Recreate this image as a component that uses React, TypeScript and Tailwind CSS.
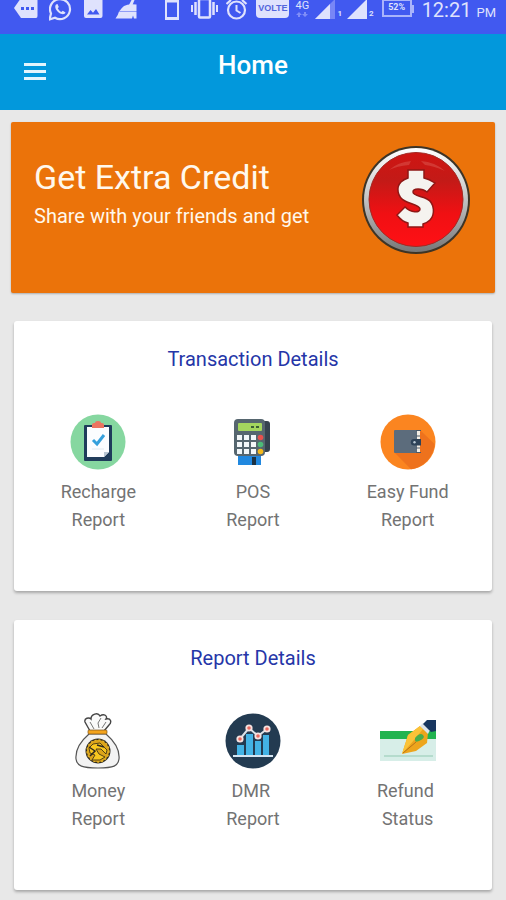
import type { ReactNode } from "react";

function StatusBar() {
  return (
    <div className="flex h-[34px] items-start justify-between bg-[#4159f0] pr-[10px] pl-[14px] text-[#dfe2fd]">
      <div className="flex items-start gap-[11px]" aria-hidden="true">
        <svg width="24" height="20" viewBox="0 0 24 20" fill="currentColor">
          <path d="M7 -2H22Q23.500 -2 23.500 0V16Q23.500 18 22 18H7L0 8Z" />
          <g fill="#4159f0">
            <rect x="7" y="7" width="3" height="3" />
            <rect x="12" y="7" width="3" height="3" />
            <rect x="17" y="7" width="3" height="3" />
          </g>
        </svg>
        <svg width="24" height="22" viewBox="0 0 24 22" fill="none" stroke="currentColor" strokeWidth="2.2">
          <path d="M0.500 19.500L2 13.500A10 10 0 1 1 6 17.800Z" />
          <path
            d="M7 4.500C5 7 7.500 11 10 12.700C12.800 14.800 16 14.500 16.500 12.500L13.800 10.700L12.300 12C10.500 11 9.500 9.800 8.800 8.300L9.800 7L8.500 4Z"
            fill="currentColor"
            stroke="none"
          />
        </svg>
        <svg width="19" height="20" viewBox="0 0 19 20" fill="currentColor">
          <rect x="0" y="-2" width="18.500" height="20" rx="2" />
          <path d="M3 14.500L6.500 10L9 12.700L12 9L15.500 14.500Z" fill="#4159f0" />
        </svg>
        <svg width="24" height="20" viewBox="0 0 24 20" fill="currentColor">
          <path d="M17.500 0H20.500L18.500 5H15Z" />
          <path d="M10 6Q14 3.500 22.500 4.500V11H5.500Q7.500 8 10 6Z" />
          <path d="M5 11.500H22.500V18.500H20L19 15.500L18 18.500H1.500Q4 15.500 5 11.500Z" />
        </svg>
      </div>
      <div className="flex items-start gap-2">
        <svg width="19" height="22" viewBox="0 0 19 22" aria-hidden="true">
          <path d="M2 -2H14V18.500H2Z" fill="none" stroke="currentColor" strokeWidth="2" />
          <path d="M1 1H15M1 18.500H15" stroke="currentColor" strokeWidth="3" />
        </svg>
        <svg width="27" height="20" viewBox="0 0 27 20" fill="none" stroke="currentColor" aria-hidden="true">
          <rect x="8" y="-1" width="11" height="18.500" rx="1" strokeWidth="2.500" />
          <path d="M4.500 2V15M22.500 2V15" strokeWidth="2.500" />
          <path d="M1 5V12M26 5V12" strokeWidth="2" />
        </svg>
        <svg width="22" height="22" viewBox="0 0 22 22" fill="none" stroke="currentColor" aria-hidden="true">
          <circle cx="10.500" cy="10" r="8.500" strokeWidth="2.200" />
          <path d="M10.500 5V10.500L14.500 13" strokeWidth="2" />
          <path d="M0.500 4L5 0M20.500 4L16 0" strokeWidth="2.200" />
        </svg>
        <div className="flex items-start gap-[5px]">
          <span className="flex h-[18px] w-[33px] items-center justify-center rounded-b bg-[#dfe2fd] font-['Liberation_Sans',sans-serif] text-[9px] font-bold text-[#5365dc]">
            VOLTE
          </span>
          <span className="flex w-4 flex-col items-center text-[11px] leading-[12px]">
            4G
            <svg width="12" height="5" viewBox="0 0 12 5" fill="#7f8df7" aria-hidden="true">
              <path d="M0 3L3 0L6 3H4V5H2V3ZM6 2H8V0H10V2H12L9 5Z" />
            </svg>
          </span>
          <span className="flex items-end">
            <svg width="22" height="19" viewBox="0 0 22 19" aria-hidden="true">
              <path d="M0 19L20 -1V19Z" fill="#7886f6" />
              <path d="M0 19L15 4V19Z" fill="currentColor" />
            </svg>
            <span className="text-[8px] leading-[10px] font-bold">1</span>
          </span>
          <span className="flex items-end">
            <svg width="22" height="19" viewBox="0 0 22 19" aria-hidden="true">
              <path d="M0 19L20 -1V19Z" fill="currentColor" />
            </svg>
            <span className="text-[8px] leading-[10px] font-bold">2</span>
          </span>
        </div>
        <div className="flex items-center">
          <span className="flex h-[17px] w-[30px] items-center justify-center border-2 border-t border-[#a9b3fb] text-[9px] font-bold">
            52%
          </span>
          <span className="h-2 w-[2px] bg-[#a9b3fb]" />
        </div>
        <div className="flex items-baseline gap-[5px]">
          <span className="text-[20px] leading-[20px]">12:21</span>
          <span className="text-[13px] leading-[16px]">PM</span>
        </div>
      </div>
    </div>
  );
}

function DollarBadge() {
  return (
    <svg width="110" height="110" viewBox="0 0 110 110" className="shrink-0" role="img" aria-label="Dollar">
      <defs>
        <linearGradient id="rim" x1="0" y1="0" x2="0" y2="1">
          <stop offset="0" stopColor="#ffffff" />
          <stop offset="0.450" stopColor="#c9c9c9" />
          <stop offset="1" stopColor="#777777" />
        </linearGradient>
        <linearGradient id="face" x1="0" y1="0" x2="0" y2="1">
          <stop offset="0" stopColor="#cf1512" />
          <stop offset="0.300" stopColor="#c31a17" />
          <stop offset="0.650" stopColor="#f01013" />
          <stop offset="1" stopColor="#ff1015" />
        </linearGradient>
      </defs>
      <circle cx="55" cy="55" r="54" fill="#3d3426" />
      <circle cx="55" cy="55" r="52" fill="url(#rim)" />
      <circle cx="55" cy="54.500" r="47" fill="url(#face)" stroke="#a32a24" strokeWidth="1" />
      <path
        d="M28 25Q37 17 50 16L48 20Q36 21 28 25ZM60 16Q74 17 84 26Q73 21 64 20Z"
        fill="#d94f48"
        opacity="0.600"
      />
      <path
        d="M47 25H63V33C68 34 71 36 74 38L66 47C61 43 52 43 52 47C52 51 61 51 66 54C74 58 74 70 69 75C67 77 65 78 62 79V82H47V78C42 77 39 74 36 70L44 62C50 68 59 68 59 64C59 60 49 59 44 56C36 52 35 42 40 37C42 35 44 34 47 33Z"
        fill="#f5f3ef"
        stroke="#8f1715"
        strokeWidth="1.500"
      />
    </svg>
  );
}

const iconProps = { width: 56, height: 56, viewBox: "0 0 56 56", "aria-hidden": true } as const;

function ClipboardIcon() {
  return (
    <svg {...iconProps}>
      <circle cx="28" cy="28" r="27.500" fill="#86d7a0" />
      <rect x="14" y="11" width="28" height="36" rx="1" fill="#1f3c5b" />
      <path d="M17 13H39V38L34 43H17Z" fill="#fbfdff" />
      <path d="M39 38L34 43V38Z" fill="#b8c6d3" />
      <path d="M22 14V11Q22 9 24 9H25Q25 7 28 7T31 9H32Q34 9 34 11V14Z" fill="#ec7460" />
      <path d="M23 26L27 30L34 21" fill="none" stroke="#35a0dc" strokeWidth="3" />
      <path d="M22 35H34" stroke="#e3eaf0" />
    </svg>
  );
}

function PosIcon() {
  return (
    <svg {...iconProps}>
      <rect x="33" y="7" width="12" height="31" rx="3" fill="#36434f" />
      <rect x="13" y="40" width="23" height="11" fill="#2188df" />
      <rect x="27" y="43" width="4" height="8" fill="#1b3244" />
      <rect x="9" y="5" width="31" height="37" rx="4" fill="#56666f" />
      <rect x="13" y="9" width="24" height="8" rx="1" fill="#a4d65e" />
      <path d="M26 13H29M31 13H34" stroke="#3c5f35" strokeWidth="2" />
      <g fill="#f3f7f9">
        <rect x="12" y="21" width="5" height="5" />
        <rect x="19" y="21" width="5" height="5" />
        <rect x="26" y="21" width="5" height="5" />
        <rect x="12" y="28" width="5" height="5" />
        <rect x="19" y="28" width="5" height="5" />
        <rect x="26" y="28" width="5" height="5" />
        <rect x="12" y="35" width="5" height="5" />
        <rect x="19" y="35" width="5" height="5" />
        <rect x="26" y="35" width="5" height="5" />
      </g>
      <circle cx="35.500" cy="23.500" r="2.800" fill="#e8504d" />
      <circle cx="35.500" cy="30.500" r="2.800" fill="#4dbb78" />
      <circle cx="35.500" cy="37.500" r="2.800" fill="#f4b91c" />
    </svg>
  );
}

function WalletIcon() {
  return (
    <svg {...iconProps}>
      <circle cx="28" cy="28" r="27.500" fill="#fb8520" />
      <path d="M41 17L54.500 30A27.500 27.500 0 0 1 31 55.300L15 39Z" fill="#ee721d" />
      <rect x="14" y="16" width="25" height="23" rx="1" fill="#5c6c7c" />
      <rect x="37" y="17" width="3" height="21" fill="#f4eee5" />
      <path d="M36 16.500H41M36 22H40M36 34H40M36 38.500H41" stroke="#4a5a69" />
      <path d="M41 25H34A3.200 3.200 0 0 0 34 31.400H41Z" fill="#2d4258" />
      <circle cx="34.500" cy="28.200" r="1.200" fill="#b9c8d4" />
    </svg>
  );
}

function MoneyBagIcon() {
  return (
    <svg {...iconProps}>
      <path
        d="M20 18L15 9C14 5 19 4 21 6C21 1 28 -1 30 3C34 0 38 3 36 6C41 5 42 9 39 12L34 18Z"
        fill="#fafafa"
        stroke="#454545"
        strokeWidth="1.400"
      />
      <path d="M24 16L20 9M29 15L28 10L31 5M32 15L36 9" fill="none" stroke="#777" />
      <path
        d="M19 21C12 27 5 35 6 46C7 53 12 55 28 55S48 53 49 46C50 36 43 27 36 21Z"
        fill="#f3f3f3"
        stroke="#555555"
        strokeWidth="1.200"
      />
      <rect x="18" y="17" width="19" height="4" rx="1" fill="#f4a41d" stroke="#7a5420" strokeWidth="0.700" />
      <circle cx="28" cy="38" r="12.500" fill="#2d2920" />
      <circle cx="28" cy="38" r="11" fill="#dca41a" stroke="#e2b128" strokeWidth="1.400" strokeDasharray="2 2" />
      <path
        d="M19 35L23 31L30 30L37 37L36 41L31 36L26 36L29 41L35 44L30 47H22L25 42L20 40Z"
        fill="#f8c71f"
        stroke="#44351a"
        strokeWidth="0.900"
      />
      <path d="M19 34L25 38L20 43M27 32L34 34" fill="none" stroke="#2d2920" strokeWidth="1.500" />
    </svg>
  );
}

function ChartIcon() {
  return (
    <svg {...iconProps}>
      <circle cx="28" cy="28" r="27.500" fill="#233b51" />
      <path d="M12 32H19V43H12ZM21 21H28V43H21ZM30 28H36V43H30ZM38 22H44V43H38Z" fill="#43b3e5" />
      <path d="M8 43H48" stroke="#d5e6f3" strokeWidth="2" />
      <path d="M15 26L24 15L33 23L42 16" fill="none" stroke="#dbe2e8" strokeWidth="2" />
      <g fill="#e9695f" stroke="#f5e3e1" strokeWidth="1.800">
        <circle cx="15" cy="26" r="2.700" />
        <circle cx="24" cy="15" r="2.700" />
        <circle cx="33" cy="23" r="2.700" />
        <circle cx="42" cy="16" r="2.700" />
      </g>
    </svg>
  );
}

function ChequeIcon() {
  return (
    <svg {...iconProps}>
      <rect x="0" y="18" width="56" height="30" fill="#d7eee8" />
      <rect x="0" y="18" width="56" height="8" fill="#22b350" />
      <path d="M4 43H53" stroke="#92c9b2" />
      <path d="M22 41L28 22L40 13L48 20L47 30L36 38Z" fill="#eda51c" />
      <path d="M22 41L28 22L40 13L43 16L34 27Z" fill="#fbc338" />
      <path d="M23 40L36 29" stroke="#b5731a" />
      <path d="M35 25Q40 19 43 22T39 28Q35 30 35 27Z" fill="#49ad4b" />
      <path d="M40 13L43 10L50 17L48 21Z" fill="#dce4ea" />
      <path d="M43 11L47 7H56V18L51 19Z" fill="#183760" />
    </svg>
  );
}

type Item = { icon: ReactNode; lines: [string, string] };

function ReportCard({ title, items }: { title: string; items: Item[] }) {
  return (
    <section className="rounded-[3px] bg-white px-[7px] pt-[25px] pb-[57px] shadow-[0_2px_3px_rgba(0,0,0,0.28)]">
      <h2 className="text-center text-[20px] leading-[26px] text-[#2536a8]">{title}</h2>
      <div className="mt-[42px] grid grid-cols-3">
        {items.map(({ icon, lines }) => (
          <button key={lines.join(" ")} type="button" className="flex flex-col items-center">
            {icon}
            <span className="mt-2 text-[18px] leading-[28px] text-[#737373]">
              {lines[0]}
              <br />
              {lines[1]}
            </span>
          </button>
        ))}
      </div>
    </section>
  );
}

const transactions: Item[] = [
  { icon: <ClipboardIcon />, lines: ["Recharge", "Report"] },
  { icon: <PosIcon />, lines: ["POS", "Report"] },
  { icon: <WalletIcon />, lines: ["Easy Fund", "Report"] },
];

const reports: Item[] = [
  { icon: <MoneyBagIcon />, lines: ["Money", "Report"] },
  { icon: <ChartIcon />, lines: ["DMR\u00a0", "Report"] },
  { icon: <ChequeIcon />, lines: ["Refund\u00a0", "Status"] },
];

export default function App() {
  return (
    <div className="min-h-screen bg-[#e8e8e8] font-[Roboto,sans-serif]">
      <StatusBar />
      <header className="grid h-[76px] grid-cols-[1fr_auto_1fr] items-start bg-[#0298dc] px-6 text-white">
        <button type="button" aria-label="Menu" className="mt-[29px] flex w-[22px] flex-col gap-[4px]">
          <span className="h-[3px] w-full bg-[#e2f5fd]" />
          <span className="h-[3px] w-full bg-[#e2f5fd]" />
          <span className="h-[3px] w-full bg-[#e2f5fd]" />
        </button>
        <h1 className="mt-4 text-[26px] leading-[30px] font-medium">Home</h1>
      </header>
      <main className="pt-3 pb-[9px]">
        <section className="mx-[11px] flex h-[171px] items-start justify-between rounded-[2px] bg-[#eb730a] pt-[23px] pr-6 pl-[23px] text-[#fff8ec] shadow-[0_1px_2px_rgba(0,0,0,0.25)]">
          <div className="pt-3">
            <h2 className="text-[34px] leading-[40px]">Get Extra Credit</h2>
            <p className="mt-[6px] text-[20px] leading-[26px]">Share with your friends and get</p>
          </div>
          <DollarBadge />
        </section>
        <div className="mx-[14px] mt-7 flex flex-col gap-[29px]">
          <ReportCard title="Transaction Details" items={transactions} />
          <ReportCard title="Report Details" items={reports} />
        </div>
      </main>
    </div>
  );
}
